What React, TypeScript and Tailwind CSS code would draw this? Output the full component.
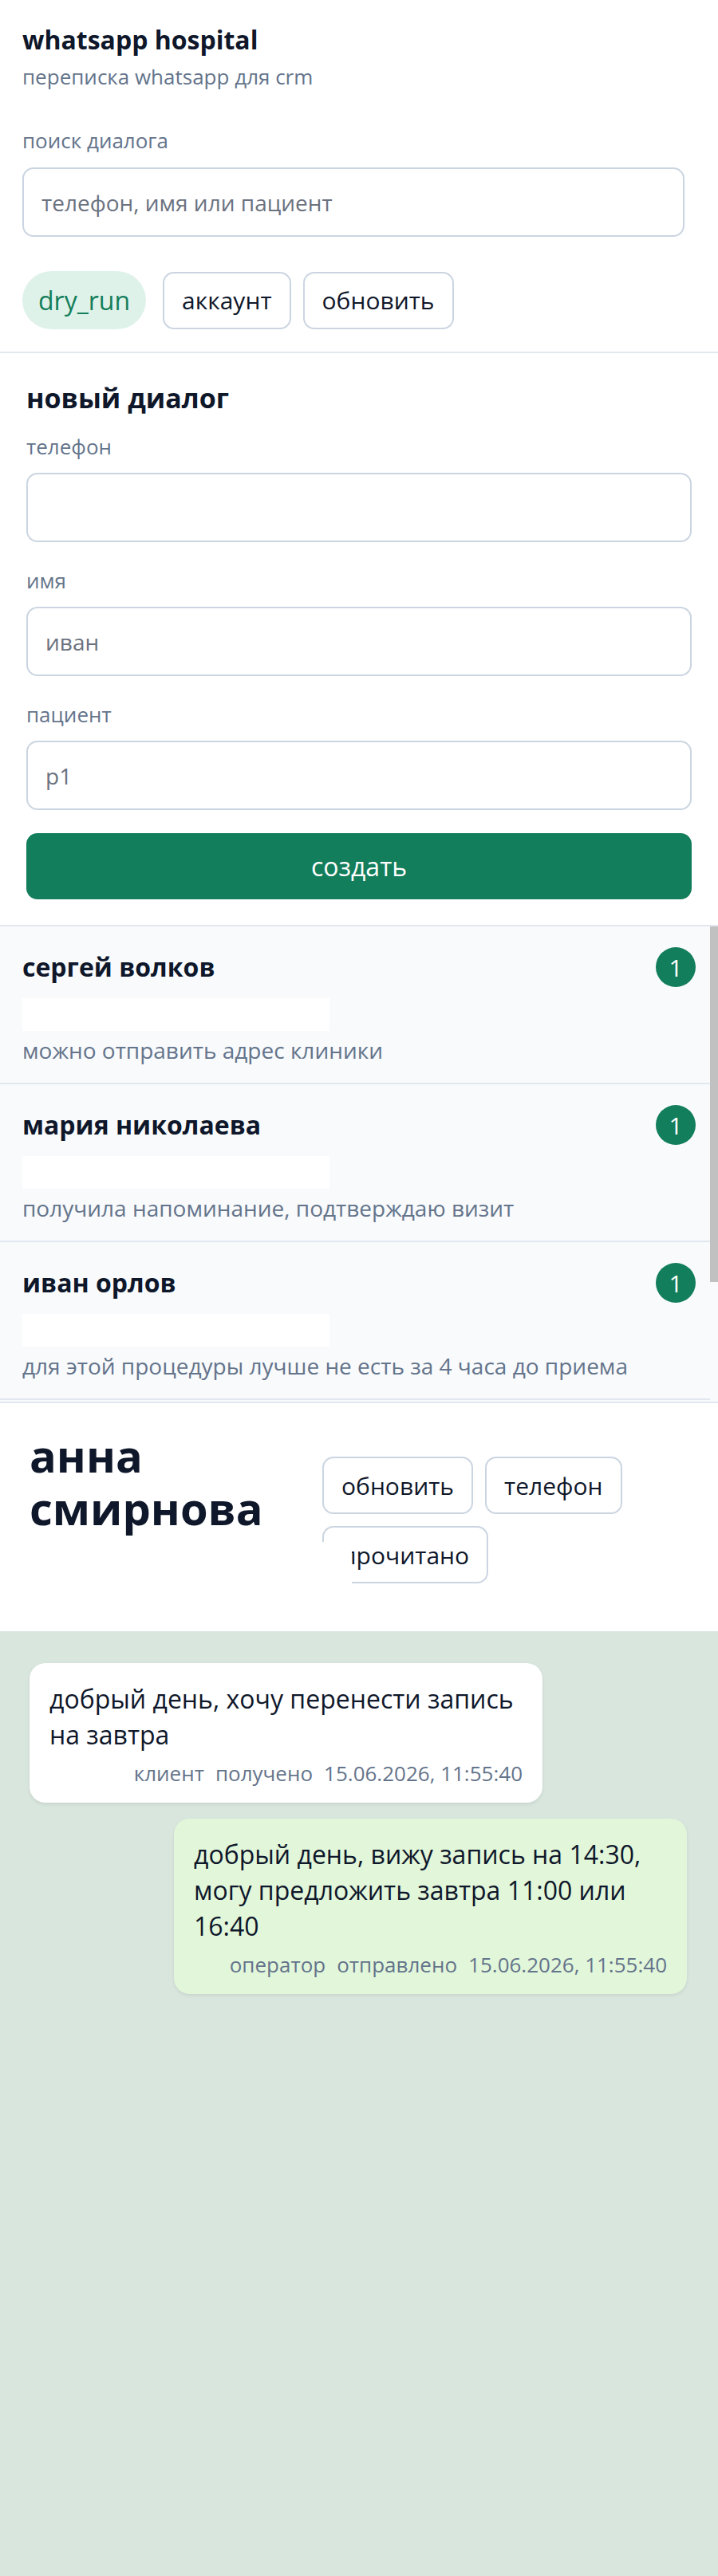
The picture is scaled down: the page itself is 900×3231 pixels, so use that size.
import React from 'react';

const dialogs = [
  { name: 'сергей волков', last: 'можно отправить адрес клиники', unread: 1 },
  { name: 'мария николаева', last: 'получила напоминание, подтверждаю визит', unread: 1 },
  { name: 'иван орлов', last: 'для этой процедуры лучше не есть за 4 часа до приема', unread: 1 },
  { name: 'анна смирнова', last: 'добрый день, вижу запись на 14:30, могу предложить завтра 11:00 или 16:40', unread: 0 },
];

const messages = [
  {
    out: false,
    text: 'добрый день, хочу перенести запись на завтра',
    who: 'клиент',
    status: 'получено',
    at: '15.06.2026, 11:55:40',
  },
  {
    out: true,
    text: 'добрый день, вижу запись на 14:30, могу предложить завтра 11:00 или 16:40',
    who: 'оператор',
    status: 'отправлено',
    at: '15.06.2026, 11:55:40',
  },
];

const inputCls =
  'block w-full h-[87px] px-[22px] rounded-[14px] border-2 border-[#cbd5e1] bg-white text-[28px] text-[#0f172a] placeholder:text-[#6b7280] outline-none';

const btnCls =
  'h-[72px] px-[22px] rounded-[14px] border-2 border-[#cbd5e1] bg-white text-[30px] text-[#0f172a] whitespace-nowrap';

function Field({ label, placeholder, first }: { label: string; placeholder: string; first?: boolean }) {
  return (
    <div className={first ? 'mt-[22px]' : 'mt-[30px]'}>
      <label className="block text-[26px] leading-[36px] text-[#64748b]">{label}</label>
      <input className={`mt-[15px] ${inputCls}`} placeholder={placeholder} />
    </div>
  );
}

export default function App() {
  return (
    <div className="min-h-screen flex flex-col bg-white font-['Open_Sans',sans-serif] text-[#0f172a]">
      {/* шапка и поиск */}
      <div className="pl-[28px] pr-[42px] pt-[30px] pb-[28px] border-b-2 border-[#e2e8f0]">
        <h1 className="text-[32px] leading-[40px] font-bold">whatsapp hospital</h1>
        <p className="mt-[8px] text-[26px] leading-[36px] text-[#64748b]">переписка whatsapp для crm</p>
        <label className="block mt-[44px] text-[26px] leading-[36px] text-[#64748b]">поиск диалога</label>
        <input className={`mt-[16px] ${inputCls}`} placeholder="телефон, имя или пациент" />
        <div className="mt-[43px] flex items-center gap-[15px]">
          <span className="mr-[6px] h-[73px] px-[20px] rounded-full bg-[#dff2e9] text-[#137e5b] text-[32px] flex items-center">
            dry_run
          </span>
          <button className={btnCls}>аккаунт</button>
          <button className={btnCls}>обновить</button>
        </div>
      </div>

      {/* новый диалог */}
      <div className="px-[33px] pt-[35px] pb-[32px]">
        <h2 className="text-[34px] leading-[42px] font-bold">новый диалог</h2>
        <Field label="телефон" placeholder="" first />
        <Field label="имя" placeholder="иван" />
        <Field label="пациент" placeholder="p1" />
        <button className="mt-[29px] w-full h-[83px] rounded-[14px] bg-[#137e5b] text-white text-[32px]">создать</button>
      </div>

      {/* список диалогов */}
      <div className="relative h-[600px] border-y-2 border-[#e2e8f0] bg-[#f8fafc] overflow-hidden">
        <div className="mr-[10px]">
          {dialogs.map((d) => (
            <div key={d.name} className="pl-[28px] pr-[18px] pt-[25px] pb-[23px] border-b-2 border-[#e2e8f0]">
              <div className="h-[52px] flex items-center justify-between">
                <span className="text-[32px] leading-[42px] font-bold">{d.name}</span>
                {d.unread > 0 && (
                  <span className="w-[50px] h-[50px] rounded-full bg-[#137e5b] text-white text-[30px] flex items-center justify-center">
                    {d.unread}
                  </span>
                )}
              </div>
              <div className="mt-[13px] h-[41px] w-[385px] bg-white" />
              <p className="mt-[6px] text-[28px] leading-[36px] text-[#64748b] truncate">{d.last}</p>
            </div>
          ))}
        </div>
        <div className="absolute right-0 top-0 w-[10px] h-[446px] bg-[#c1c1c1]" />
      </div>

      {/* шапка чата */}
      <div className="flex items-start pl-[37px] pt-[32px] pb-[56px] bg-white">
        <div className="w-[333px] shrink-0">
          <h2 className="text-[56px] leading-[66px] font-bold">анна смирнова</h2>
          <div className="relative z-10 mt-[10px] h-[56px] w-[404px] bg-white" />
        </div>
        <div className="ml-[34px] mt-[35px] w-[460px] flex flex-wrap gap-[15px]">
          <button className={btnCls}>обновить</button>
          <button className={btnCls}>телефон</button>
          <button className={btnCls}>прочитано</button>
        </div>
      </div>

      {/* сообщения */}
      <div className="flex-1 bg-[#d8e6de] pt-[40px] pl-[37px] pr-[39px] pb-[40px] flex flex-col gap-[20px]">
        {messages.map((m, i) => (
          <div
            key={i}
            className={`max-w-[643px] rounded-[20px] px-[25px] pt-[22px] pb-[19px] shadow-[0_2px_4px_rgba(0,0,0,0.08)] ${
              m.out ? 'self-end bg-[#e2f6da]' : 'self-start bg-white'
            }`}
          >
            <p className="text-[32px] leading-[45px]">{m.text}</p>
            <div className="mt-[8px] flex justify-end gap-[14px] text-[26px] leading-[36px] text-[#64748b]">
              <span>{m.who}</span>
              <span>{m.status}</span>
              <span>{m.at}</span>
            </div>
          </div>
        ))}
      </div>
    </div>
  );
}
